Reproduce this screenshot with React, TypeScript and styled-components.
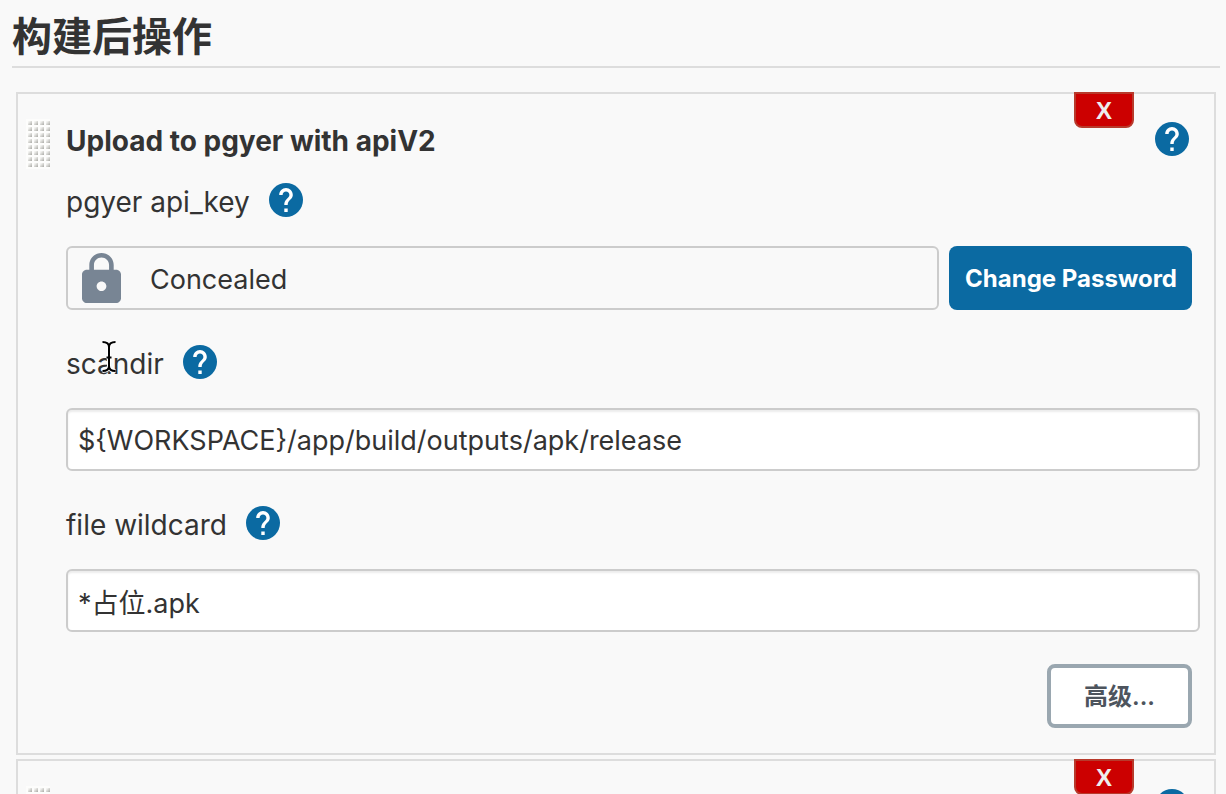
import React from "react";
import styled, { createGlobalStyle } from "styled-components";

const GlobalStyle = createGlobalStyle`
  *, *::before, *::after { box-sizing: border-box; }
  body {
    margin: 0;
    overflow: hidden;
    background: #f9f9f9;
    color: #333;
    font-family: Inter, "Noto Sans CJK SC", sans-serif;
    font-size: 27px;
  }
`;

const Page = styled.main`
  height: 100vh;
  overflow: hidden;
  padding: 8px 6px 0 12px;
`;

const SectionTitle = styled.h1`
  margin: 0 0 24px;
  height: 60px;
  border-bottom: 2px solid #ddd;
  font-size: 40px;
  line-height: 58px;
  font-weight: 700;
`;

const StepList = styled.div`
  display: flex;
  flex-direction: column;
  gap: 4px;
  padding: 0 4px;
`;

const Step = styled.section`
  position: relative;
  border: 2px solid #ddd;
  padding: 25px 14px 25px 8px;
`;

const DeleteButton = styled.button`
  position: absolute;
  top: -2px;
  right: 80px;
  width: 60px;
  height: 36px;
  padding: 2px 0 0;
  border: 2px solid #b83a2c;
  border-radius: 0 0 8px 8px;
  background: #c00;
  color: #eee;
  font: bold 24px/30px "Liberation Sans", sans-serif;
`;

const StepHeader = styled.header`
  display: flex;
  align-items: flex-start;
  gap: 16px;
  height: 50px;
  margin-bottom: 14px;
`;

const StepHeading = styled.div`
  flex: 1;
  display: flex;
  align-items: center;
  justify-content: space-between;
  height: 38px;
  margin: 3px 11px 0 0;
`;

const StepTitle = styled.h2`
  margin: 0;
  font-size: 28px;
  line-height: 38px;
  font-weight: 700;
`;

const Fields = styled.div`
  padding-left: 40px;
`;

const LabelRow = styled.div`
  display: flex;
  align-items: center;
  gap: 19px;
  height: 38px;
  margin-bottom: 25px;
`;

const HelpButton = styled.button`
  width: 34px;
  height: 34px;
  margin: 0 0 4px auto;
  padding: 0;
  border: 0;
  background: none;

  ${LabelRow} & { margin-left: 0; }

  svg { display: block; }
`;

const Concealed = styled.div`
  flex: 1;
  display: flex;
  align-items: center;
  gap: 29px;
  height: 64px;
  padding-left: 14px;
  border: 2px solid #ccc;
  border-radius: 6px;
`;

const ConcealedText = styled.span`
  padding-top: 2px;
`;

const PasswordRow = styled.div`
  display: flex;
  gap: 10px;
  margin: 0 8px 35px 0;
`;

const PrimaryButton = styled.button`
  height: 64px;
  padding: 2px 15px 0 16px;
  border: 0;
  border-radius: 8px;
  background: #0b6aa2;
  color: #fff;
  font: 700 24px/32px Inter, sans-serif;
`;

const TextInput = styled.input`
  display: block;
  width: 100%;
  height: 63px;
  margin-bottom: 35px;
  padding: 2px 10px 0;
  border: 2px solid #ccc;
  border-radius: 6px;
  background: #fff;
  box-shadow: inset 0 2px 2px rgba(0, 0, 0, 0.08);
  color: #333;
  font: inherit;
  outline: none;
`;

const Actions = styled.div`
  display: flex;
  justify-content: flex-end;
  margin: -3px 8px 0 0;
`;

const SecondaryButton = styled.button`
  height: 64px;
  padding: 2px 33px 0;
  border: 4px solid #9aa7b0;
  border-radius: 8px;
  background: #fff;
  color: #4d545d;
  font: 600 24px/32px Inter, "Noto Sans CJK SC", sans-serif;
`;

const LabelText = styled.label`
  position: relative;
  font-size: 28px;
  line-height: 38px;
`;

const Pointer = styled.svg`
  position: absolute;
  top: -5px;
  left: 35px;
`;

function Help({ topic }: { topic: string }) {
  return (
    <HelpButton type="button" aria-label={`Help: ${topic}`}>
      <svg width="34" height="34" viewBox="2 2 20 20" aria-hidden="true">
        <circle cx="12" cy="12" r="10" fill="#0b6aa2" />
        <path
          fill="#fff"
          d="M13 19h-2v-2h2v2zm2.07-7.75l-.9.92C13.45 12.9 13 13.5 13 15h-2v-.5c0-1.1.45-2.1 1.17-2.83l1.24-1.26c.37-.36.59-.86.59-1.41 0-1.1-.9-2-2-2s-2 .9-2 2H8c0-2.21 1.79-4 4-4s4 1.79 4 4c0 .88-.36 1.68-.93 2.25z"
        />
      </svg>
    </HelpButton>
  );
}

function Grip() {
  const rows = [0, 1, 2, 3, 4, 5, 6, 7];
  const columns = [0, 1, 2, 3];
  return (
    <svg width="24" height="50" viewBox="0 0 24 50" aria-hidden="true">
      <defs>
        <linearGradient id="grip-dot" x1="0" y1="0" x2="1" y2="1">
          <stop offset="0.2" stopColor="#f4f4f2" />
          <stop offset="1" stopColor="#a9a9a4" />
        </linearGradient>
      </defs>
      <rect width="24" height="50" fill="#fdfdfc" />
      {rows.map((r) =>
        columns.map((c) => (
          <rect
            key={`${r}-${c}`}
            x={2 + c * 6}
            y={2 + r * 6}
            width="4"
            height="4"
            fill="url(#grip-dot)"
          />
        ))
      )}
    </svg>
  );
}

function Lock() {
  return (
    <svg width="39" height="50" viewBox="4 1 16 21" preserveAspectRatio="none" aria-hidden="true">
      <path
        fill="#788594"
        d="M18 8h-1V6c0-2.76-2.24-5-5-5S7 3.24 7 6v2H6c-1.1 0-2 .9-2 2v10c0 1.1.9 2 2 2h12c1.1 0 2-.9 2-2V10c0-1.1-.9-2-2-2zm-6 9c-1.1 0-2-.9-2-2s.9-2 2-2 2 .9 2 2-.9 2-2 2zm3.1-9H8.9V6c0-1.71 1.39-3.1 3.1-3.1s3.1 1.39 3.1 3.1v2z"
      />
    </svg>
  );
}

function TextCursor() {
  const beam =
    "M1.500 2C5 2 8 3 8 7V26C8 30 5 31 1.500 31M14.500 2C11 2 8 3 8 7M8 26C8 30 11 31 14.500 31M5.500 17.500H10.500";
  return (
    <Pointer width="16" height="34" viewBox="0 0 16 34" fill="none" aria-hidden="true">
      <path d={beam} stroke="#fff" strokeWidth="4" />
      <path d={beam} stroke="#000" strokeWidth="2" />
    </Pointer>
  );
}

export default function App() {
  return (
    <>
      <GlobalStyle />
      <Page>
        <SectionTitle>构建后操作</SectionTitle>
        <StepList>
          <Step>
            <DeleteButton type="button">X</DeleteButton>
            <StepHeader>
              <Grip />
              <StepHeading>
                <StepTitle>Upload to pgyer with apiV2</StepTitle>
                <Help topic="Upload to pgyer" />
              </StepHeading>
            </StepHeader>
            <Fields>
              <LabelRow>
                <LabelText as="span">pgyer api_key</LabelText>
                <Help topic="api_key" />
              </LabelRow>
              <PasswordRow>
                <Concealed>
                  <Lock />
                  <ConcealedText>Concealed</ConcealedText>
                </Concealed>
                <PrimaryButton type="button">Change Password</PrimaryButton>
              </PasswordRow>
              <LabelRow>
                <LabelText htmlFor="scandir">
                  scandir
                  <TextCursor />
                </LabelText>
                <Help topic="scandir" />
              </LabelRow>
              <TextInput id="scandir" defaultValue="${WORKSPACE}/app/build/outputs/apk/release" />
              <LabelRow>
                <LabelText htmlFor="wildcard">file wildcard</LabelText>
                <Help topic="file wildcard" />
              </LabelRow>
              <TextInput id="wildcard" defaultValue="*占位.apk" />
              <Actions>
                <SecondaryButton type="button">高级...</SecondaryButton>
              </Actions>
            </Fields>
          </Step>
          <Step>
            <DeleteButton type="button">X</DeleteButton>
            <StepHeader>
              <Grip />
              <StepHeading>
                <Help topic="build step" />
              </StepHeading>
            </StepHeader>
          </Step>
        </StepList>
      </Page>
    </>
  );
}
